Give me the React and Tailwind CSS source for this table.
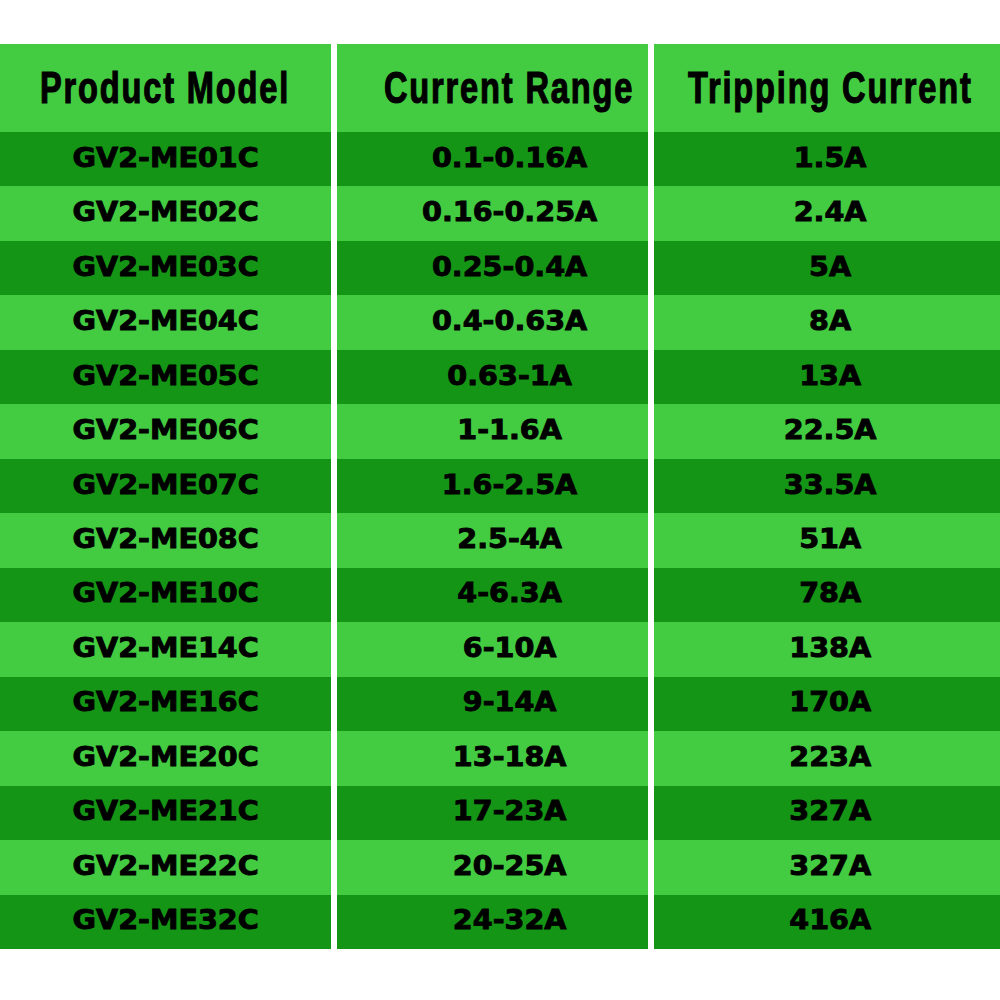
import React from "react";

const rows = [
  ["GV2-ME01C", "0.1-0.16A", "1.5A"],
  ["GV2-ME02C", "0.16-0.25A", "2.4A"],
  ["GV2-ME03C", "0.25-0.4A", "5A"],
  ["GV2-ME04C", "0.4-0.63A", "8A"],
  ["GV2-ME05C", "0.63-1A", "13A"],
  ["GV2-ME06C", "1-1.6A", "22.5A"],
  ["GV2-ME07C", "1.6-2.5A", "33.5A"],
  ["GV2-ME08C", "2.5-4A", "51A"],
  ["GV2-ME10C", "4-6.3A", "78A"],
  ["GV2-ME14C", "6-10A", "138A"],
  ["GV2-ME16C", "9-14A", "170A"],
  ["GV2-ME20C", "13-18A", "223A"],
  ["GV2-ME21C", "17-23A", "327A"],
  ["GV2-ME22C", "20-25A", "327A"],
  ["GV2-ME32C", "24-32A", "416A"],
];

const headers = ["Product Model", "Current Range", "Tripping Current"];
// middle column text sits a bit right of centre in the picture
const pads = ["pl-0", "pl-[34px]", "pl-[6px]"];

const App = () => {
  return (
    <div className="w-[1000px] h-[1000px] bg-white pt-[44px]">
      <div className="grid grid-cols-[331px_311px_346px] gap-x-[6px] grid-rows-[88px_repeat(15,54.47px)]">
        {headers.map((h, i) => (
          <div
            key={h}
            className={`bg-[#43cb41] flex items-center justify-center ${pads[i]}`}
          >
            <span className="inline-block whitespace-nowrap scale-x-[0.74] font-['Liberation_Sans',sans-serif] font-bold text-[44px] leading-none text-black tracking-[2.5px] [-webkit-text-stroke:1.2px_black]">
              {h}
            </span>
          </div>
        ))}
        {rows.map((r, ri) =>
          r.map((cell, ci) => (
            <div
              key={ri + "-" + ci}
              className={`${ri % 2 === 0 ? "bg-[#159515]" : "bg-[#43cb41]"} flex items-center justify-center pb-[3px] ${pads[ci]}`}
            >
              <span className="inline-block whitespace-nowrap scale-x-[1.1] font-['DejaVu_Sans',sans-serif] font-bold text-[26px] leading-none text-black [-webkit-text-stroke:0.9px_black]">
                {cell}
              </span>
            </div>
          ))
        )}
      </div>
    </div>
  );
};

export default App;
